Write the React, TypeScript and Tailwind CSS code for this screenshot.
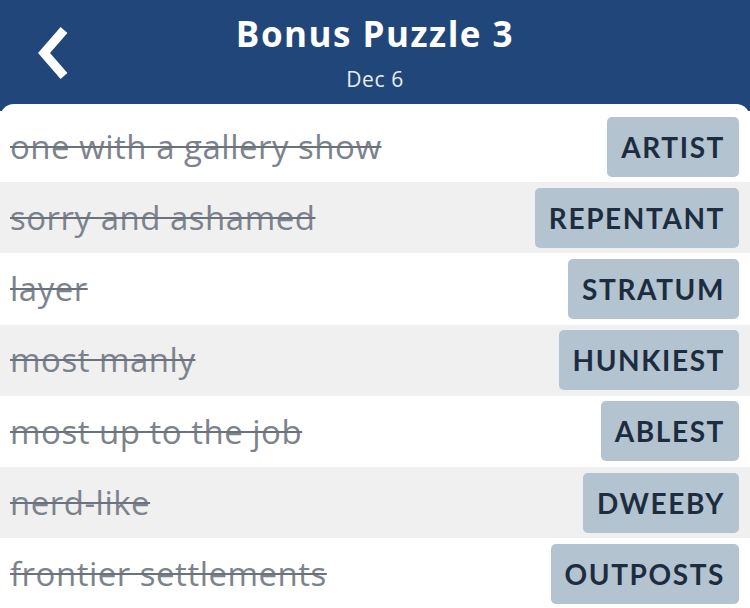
import React from 'react';

type Clue = {
  clue: string;
  answer: string;
};

const clues: Clue[] = [
  { clue: 'one with a gallery show', answer: 'ARTIST' },
  { clue: 'sorry and ashamed', answer: 'REPENTANT' },
  { clue: 'layer', answer: 'STRATUM' },
  { clue: 'most manly', answer: 'HUNKIEST' },
  { clue: 'most up to the job', answer: 'ABLEST' },
  { clue: 'nerd-like', answer: 'DWEEBY' },
  { clue: 'frontier settlements', answer: 'OUTPOSTS' },
];

function App() {
  return (
    <div className="h-[608px] overflow-hidden bg-[#21477a] font-['Lato','Liberation_Sans',sans-serif]">
      {/* Header */}
      <div className="relative flex h-[104px] flex-col items-center font-['Open_Sans',sans-serif]">
        <button className="absolute left-[36px] top-[26px] h-[54px] w-[36px]">
          <svg viewBox="0 0 36 54" className="h-full w-full">
            <path d="M28 4 L8 27 L28 50" fill="none" stroke="white" strokeWidth="9" strokeLinecap="butt" strokeLinejoin="miter" />
          </svg>
        </button>
        <h1 className="mt-[12px] text-[35px] font-bold leading-[44px] tracking-[1.5px] text-white">Bonus Puzzle 3</h1>
        <p className="mt-[11px] text-[21px] leading-[24px] tracking-[0.6px] text-[#e8eef6]">Dec 6</p>
      </div>

      {/* List */}
      <div className="rounded-t-[14px] bg-white pt-[7px]">
        {clues.map((c, i) => (
          <div
            key={c.answer}
            className={`flex h-[71.2px] items-center justify-between pl-[10px] pr-[11px] ${i % 2 === 1 ? 'bg-[#f0f0f0]' : 'bg-white'}`}
          >
            <span className="font-['Open_Sans',sans-serif] text-[33px] tracking-[0.5px] text-[#7d838c] line-through decoration-[#6c727b] decoration-2">
              {c.clue}
            </span>
            <span className="flex h-[60px] items-center rounded-[5px] bg-[#b3c3d0] px-[14px] text-[28px] font-bold tracking-[1.6px] text-[#1d2d3f]">
              {c.answer}
            </span>
          </div>
        ))}
      </div>
    </div>
  );
}

export default App;
